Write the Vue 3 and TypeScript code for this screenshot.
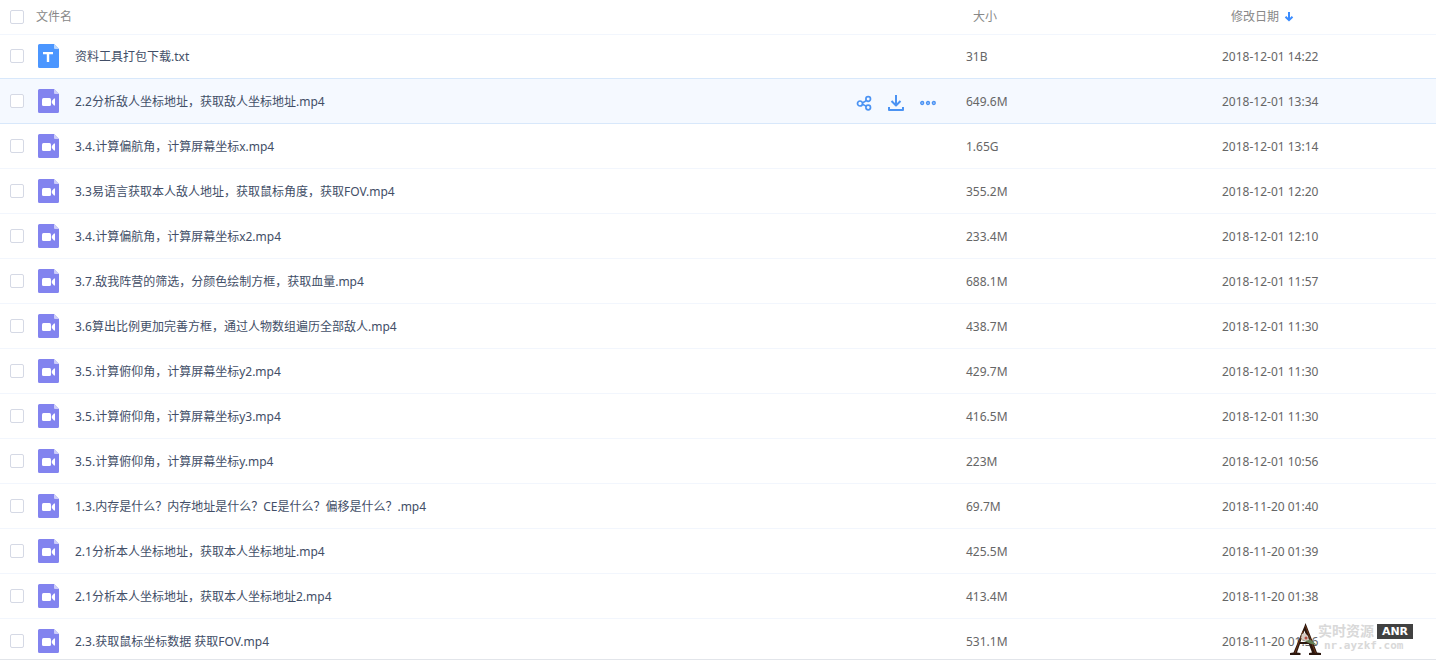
<script setup lang="ts">
import { ref } from 'vue'

interface FileItem {
  name: string
  size: string
  date: string
  kind: 'text' | 'video'
  active?: boolean
}

const video = (name: string, size: string, date: string, active = false): FileItem => ({
  name, size, date, kind: 'video', active,
})

const files: FileItem[] = [
  { name: '资料工具打包下载.txt', size: '31B', date: '2018-12-01 14:22', kind: 'text' },
  video('2.2分析敌人坐标地址，获取敌人坐标地址.mp4', '649.6M', '2018-12-01 13:34', true),
  video('3.4.计算偏航角，计算屏幕坐标x.mp4', '1.65G', '2018-12-01 13:14'),
  video('3.3易语言获取本人敌人地址，获取鼠标角度，获取FOV.mp4', '355.2M', '2018-12-01 12:20'),
  video('3.4.计算偏航角，计算屏幕坐标x2.mp4', '233.4M', '2018-12-01 12:10'),
  video('3.7.敌我阵营的筛选，分颜色绘制方框，获取血量.mp4', '688.1M', '2018-12-01 11:57'),
  video('3.6算出比例更加完善方框，通过人物数组遍历全部敌人.mp4', '438.7M', '2018-12-01 11:30'),
  video('3.5.计算俯仰角，计算屏幕坐标y2.mp4', '429.7M', '2018-12-01 11:30'),
  video('3.5.计算俯仰角，计算屏幕坐标y3.mp4', '416.5M', '2018-12-01 11:30'),
  video('3.5.计算俯仰角，计算屏幕坐标y.mp4', '223M', '2018-12-01 10:56'),
  video('1.3.内存是什么？内存地址是什么？CE是什么？偏移是什么？.mp4', '69.7M', '2018-11-20 01:40'),
  video('2.1分析本人坐标地址，获取本人坐标地址.mp4', '425.5M', '2018-11-20 01:39'),
  video('2.1分析本人坐标地址，获取本人坐标地址2.mp4', '413.4M', '2018-11-20 01:38'),
  video('2.3.获取鼠标坐标数据 获取FOV.mp4', '531.1M', '2018-11-20 01:36'),
]

const selected = ref<string[]>([])

function toggleAll(event: Event) {
  selected.value = (event.target as HTMLInputElement).checked ? files.map((f) => f.name) : []
}
</script>

<template>
  <main class="page">
    <div class="list">
      <table class="files">
        <colgroup>
          <col>
          <col class="col-size">
          <col class="col-date">
        </colgroup>
        <thead>
          <tr>
            <th>
              <div class="name-cell">
                <input id="all" class="box" type="checkbox" @change="toggleAll">
                <label class="all-label" for="all">文件名</label>
              </div>
            </th>
            <th class="head-size">大小</th>
            <th class="head-date">
              <button class="sort" type="button">
                修改日期
                <svg width="10" height="11" viewBox="0 0 10 11" aria-hidden="true">
                  <path d="M5 0v8M1.500 4.700 5 8.200l3.500-3.500" fill="none" stroke="#3b8cff" stroke-width="2" />
                </svg>
              </button>
            </th>
          </tr>
        </thead>
        <tbody>
          <tr v-for="file in files" :key="file.name" :class="{ active: file.active }">
            <td>
              <div class="name-cell">
                <input v-model="selected" class="box" type="checkbox" :value="file.name" :aria-label="file.name">
                <svg class="file-icon" width="21" height="24" viewBox="0 0 21 24" aria-hidden="true">
                  <path
                    d="M1.5 0H16l5 5v17.5a1.5 1.5 0 0 1-1.5 1.5h-18A1.5 1.5 0 0 1 0 22.5v-21A1.5 1.5 0 0 1 1.5 0Z"
                    :fill="file.kind === 'text' ? '#4b96ff' : '#8283ef'"
                  />
                  <path d="M16 0v4a1 1 0 0 0 1 1h4Z" :fill="file.kind === 'text' ? '#b9d7ff' : '#cdcdfa'" />
                  <path v-if="file.kind === 'text'" d="M5 8h10v2.200h-3.800V18H8.800v-7.800H5Z" fill="#fff" />
                  <g v-else fill="#fff">
                    <rect x="4" y="9" width="9" height="8" rx="1.500" />
                    <path d="M13.800 12 16 9.500h1v7h-1L13.800 14Z" />
                  </g>
                </svg>
                <a class="name" href="#">{{ file.name }}</a>
                <div v-if="file.active" class="actions">
                  <button type="button" aria-label="分享">
                    <svg width="16" height="16" viewBox="0 0 16 16">
                      <g fill="none" stroke="#4b93f3" stroke-width="1.700">
                        <circle cx="4" cy="8.500" r="2.500" />
                        <circle cx="12.200" cy="4" r="2.300" />
                        <circle cx="12.200" cy="12.500" r="2.300" />
                        <path d="M6.500 7.800 8 7Q9.200 6.500 10.200 5.300M6.500 9.200 8 10Q9.200 10.500 10.200 11.300" />
                      </g>
                    </svg>
                  </button>
                  <button type="button" aria-label="下载">
                    <svg width="16" height="16" viewBox="0 0 16 16">
                      <path
                        d="M8 0v10M3.500 6 8 10.500 12.500 6M1 12v3h14v-3"
                        fill="none" stroke="#4b93f3" stroke-width="2" stroke-linejoin="round"
                      />
                    </svg>
                  </button>
                  <button type="button" aria-label="更多">
                    <svg width="16" height="16" viewBox="0 0 16 16">
                      <g fill="#a5c9fa" stroke="#4b93f3" stroke-width="1.300">
                        <circle cx="2.200" cy="8" r="1.500" />
                        <circle cx="8" cy="8" r="1.500" />
                        <circle cx="13.800" cy="8" r="1.500" />
                      </g>
                    </svg>
                  </button>
                </div>
              </div>
            </td>
            <td class="value">{{ file.size }}</td>
            <td class="value">{{ file.date }}</td>
          </tr>
        </tbody>
      </table>
    </div>

    <aside class="watermark">
      <svg width="32" height="34" viewBox="0 0 32 34" aria-hidden="true">
        <path d="M15.500 1 27 30.500 31 31v2H19v-2l3-.5L18.800 22H10L7 30.500l3.500.5v2H0v-2l3.500-.5L14.500 4ZM14.500 8.500 10.500 20H18Z" fill="#2c170e" />
        <path d="m15.500 4 10 27M5 31 13 9" fill="none" stroke="#6b3519" />
        <path d="m11 12 5 4 5 2 6 5-6-1-7-3Z" fill="#668057" />
        <path d="m12 12 3-1 3 3 1 4-4 1-4-3Z" fill="#d8cbc2" />
        <circle cx="16" cy="16" r="1.500" fill="#b34d40" />
      </svg>
      <div class="brand">
        <div class="brand-top">
          <span class="brand-name">实时资源</span>
          <span class="brand-tag">ANR</span>
        </div>
        <span class="brand-site">nr.ayzkf.com</span>
      </div>
    </aside>
  </main>
</template>

<style>
body {
  margin: 0;
  background: #fff;
}
</style>

<style scoped>
.page {
  position: relative;
  box-sizing: border-box;
  height: 100vh;
  padding-bottom: 6px;
  overflow: hidden;
  font: 12px/18px "Noto Sans", "Noto Sans CJK SC", sans-serif;
  color: #666;
}

.list {
  box-sizing: border-box;
  height: 100%;
  overflow: hidden;
  border-bottom: 1px solid #e2e5ea;
}

.files {
  width: 100%;
  table-layout: fixed;
  border-collapse: separate;
  border-spacing: 0;
}

.col-size {
  width: 256px;
}

.col-date {
  width: 214px;
}

th,
td {
  box-sizing: border-box;
  height: 45px;
  padding: 0;
  border-bottom: 1px solid #f2f6fd;
  text-align: left;
  font-weight: 400;
  white-space: nowrap;
}

th {
  height: 35px;
  color: #888;
}

.value {
  padding-top: 2px;
}

tbody tr:first-child td {
  height: 44px;
  padding-bottom: 1px;
  border-bottom-color: #d8e8fb;
}

.active td {
  background: #f5f9ff;
  border-bottom-color: #d8e8fb;
}

.head-size {
  padding-left: 7px;
}

.head-date {
  padding-left: 9px;
}

.name-cell {
  display: flex;
  align-items: center;
  padding: 0 30px 0 10px;
}

.box {
  appearance: none;
  flex: none;
  box-sizing: border-box;
  width: 14px;
  height: 14px;
  margin: 0;
  border: 1px solid #d5d9e5;
  border-radius: 2px;
  background: #fff;
}

.box:checked {
  background: #3b8cff;
}

.all-label {
  margin-left: 12px;
}

.file-icon {
  flex: none;
  margin: 0 16px 0 14px;
}

.name {
  padding-top: 2px;
  color: #424e67;
  text-decoration: none;
}

button {
  display: flex;
  align-items: center;
  padding: 0;
  border: 0;
  background: none;
  color: inherit;
  font: inherit;
  cursor: pointer;
}

.sort {
  gap: 5px;
}

.actions {
  display: flex;
  gap: 16px;
  margin-left: auto;
  padding-top: 4px;
}

.watermark {
  position: absolute;
  right: 23px;
  bottom: 10px;
  display: flex;
  align-items: flex-start;
}

.brand {
  display: flex;
  flex-direction: column;
  margin-left: -4px;
  color: #d9d9d9;
}

.brand-top {
  display: flex;
  align-items: center;
  gap: 3px;
}

.brand-name {
  font-size: 14px;
  line-height: 18px;
  font-weight: 700;
}

.brand-tag {
  width: 36px;
  background: #414141;
  color: #fff;
  font: 700 11px/15px "DejaVu Sans", sans-serif;
  text-align: center;
}

.brand-site {
  padding-left: 6px;
  font: 700 11px/12px "DejaVu Sans Mono", monospace;
}
</style>
